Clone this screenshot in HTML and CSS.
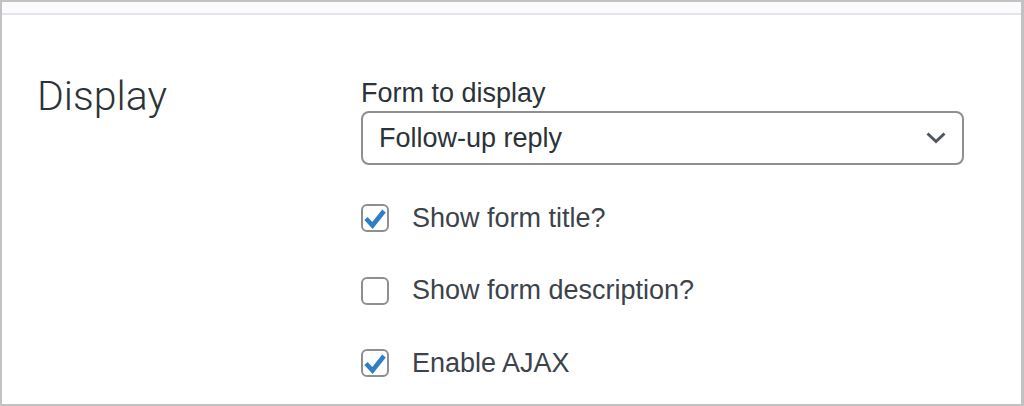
FILE: index.html
```html
<!DOCTYPE html>
<html lang="en">

<head>
    <meta charset="UTF-8">
    <title>Display settings</title>
    <link rel="stylesheet" href="styles.css">
</head>

<body>

    <div class="ramme">
        <div class="topbar"></div>

        <section class="indstilling">
            <h2 class="overskrift">Display</h2>

            <div class="felter">
                <label class="feltnavn" for="formular">Form to display</label>
                <div class="vaelger" id="formular" role="combobox">
                    <span>Follow-up reply</span>
                    <svg class="pil" width="20" height="12" viewBox="0 0 20 12">
                        <polyline points="1.5,1.5 10,9.5 18.5,1.5" fill="none" stroke="#50575e" stroke-width="3" />
                    </svg>
                </div>

                <div class="valg">
                    <div class="linje">
                        <span class="boks tjekket">
                            <svg width="28" height="28" viewBox="0 0 28 28">
                                <polyline points="5,14.5 11.5,21.5 23,7" fill="none" stroke="#2f7fc6" stroke-width="4.6" />
                            </svg>
                        </span>
                        <span class="tekst">Show form title?</span>
                    </div>
                    <div class="linje">
                        <span class="boks"></span>
                        <span class="tekst">Show form description?</span>
                    </div>
                    <div class="linje">
                        <span class="boks tjekket">
                            <svg width="28" height="28" viewBox="0 0 28 28">
                                <polyline points="5,14.5 11.5,21.5 23,7" fill="none" stroke="#2f7fc6" stroke-width="4.6" />
                            </svg>
                        </span>
                        <span class="tekst">Enable AJAX</span>
                    </div>
                </div>
            </div>
        </section>
    </div>

</body></html>
```

FILE: styles.css
```css
body {
    margin: 0;
    font-family: "Liberation Sans", Arial, sans-serif;
    color: #3c434a;
    background: #fff;
}

.ramme {
    box-sizing: border-box;
    width: 1024px;
    height: 406px;
    border: 2px solid #c2c2c2;
    border-right-width: 3px;
    overflow: hidden;
}

.topbar {
    height: 11px;
    background-color: #fbfbfd;
    border-bottom: 2px solid #e0e4eb;
}

.indstilling {
    display: grid;
    grid-template-columns: 324px 603px;
    padding: 62px 0 0 35px;
}

.overskrift {
    margin: -2px 0 0;
    font-family: Roboto, "Liberation Sans", sans-serif;
    font-weight: 300;
    font-size: 41px;
    line-height: 42px;
    color: #2c3338;
}

.felter {
    display: flex;
    flex-direction: column;
}

.feltnavn {
    font-size: 27px;
    line-height: 32px;
    margin-bottom: 2px;
    color: #2c3338;
}

.vaelger {
    box-sizing: border-box;
    height: 54px;
    display: flex;
    align-items: center;
    justify-content: space-between;
    padding: 0 16px 0 16px;
    border: 2px solid #8c8f94;
    border-radius: 8px;
    font-size: 27px;
    color: #2c3338;
}

.pil {
    display: block;
}

.valg {
    display: flex;
    flex-direction: column;
    gap: 44.5px;
    margin-top: 39px;
}

.linje {
    display: flex;
    align-items: center;
    height: 28px;
}

.boks {
    box-sizing: border-box;
    width: 28px;
    height: 28px;
    border: 2px solid #8c8f94;
    border-radius: 6px;
    background: #fff;
    display: flex;
    align-items: center;
    justify-content: center;
    flex-shrink: 0;
}

.boks svg {
    display: block;
    margin: -2px;
}

.tekst {
    margin-left: 23px;
    font-size: 27px;
    color: #3c434a;
}
```
